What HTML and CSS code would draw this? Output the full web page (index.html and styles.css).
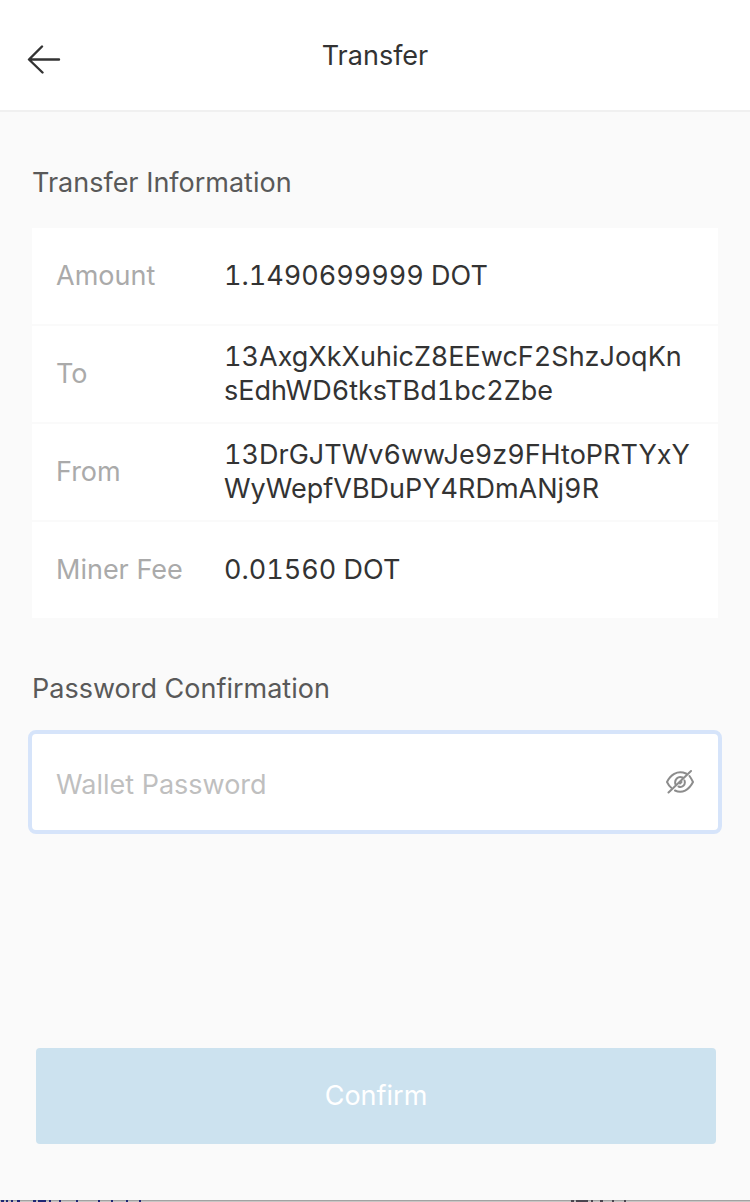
FILE: index.html
```html
<!DOCTYPE html>
<html lang="en">
<head>
<meta charset="utf-8">
<meta name="viewport" content="width=device-width, initial-scale=1">
<title>Transfer</title>
<link rel="stylesheet" href="styles.css">
</head>
<body>
<div class="page">
  <header class="topbar">
    <button class="back" type="button" aria-label="Back">
      <svg width="34" height="30" viewBox="0 0 34 30" fill="none" stroke="#333" stroke-width="2.4" stroke-linecap="round" stroke-linejoin="round"><path d="M15 2.500 2 15.500l13.500 13M2.500 15.500H32"/></svg>
    </button>
    <h1 class="title">Transfer</h1>
  </header>
  <form class="content">
    <h2 class="heading">Transfer Information</h2>
    <dl class="details">
      <div class="row"><dt>Amount</dt><dd>1.1490699999 DOT</dd></div>
      <div class="row"><dt>To</dt><dd>13AxgXkXuhicZ8EEwcF2ShzJoqKn<wbr>sEdhWD6tksTBd1bc2Zbe</dd></div>
      <div class="row"><dt>From</dt><dd>13DrGJTWv6wwJe9z9FHtoPRTYxY<wbr>WyWepfVBDuPY4RDmANj9R</dd></div>
      <div class="row"><dt>Miner Fee</dt><dd>0.01560 DOT</dd></div>
    </dl>
    <label class="heading" for="password">Password Confirmation</label>
    <div class="field">
      <input id="password" type="password" placeholder="Wallet Password">
      <button class="reveal" type="button" aria-label="Show password">
        <svg width="28" height="26" viewBox="0 0 28 26" fill="none" stroke="#8c8c8c" stroke-width="2" stroke-linecap="round"><path d="M20 4.500C11 .5 4 6.500 1 13c1 2 2 4 4 5.500M23.500 7c1.500 2 2.500 4 3.500 6-4 8-11 12-18 8.500M16.500 8.500C12 6.500 8 11 9.500 15.500M18.500 11.500C20 16 16 19 12.500 17.500M15.500 13 14 14.500M2.500 23.500 25 2"/></svg>
      </button>
    </div>
    <button class="confirm" type="button">Confirm</button>
  </form>
  <svg class="edge" height="2" aria-hidden="true"><path d="M0 .5H750" stroke="#a2a2a2"/><path d="M0 1.500H750" stroke="#c8c5c4"/><path d="M1 1h3m2 0h2m3 0h2m4 0h3m13 0h3m2 0h8m3 0h2m8 0h2m15 0h2m20 0h2m11 0h2m13 0h2m11 0h2" stroke="#1f2674" stroke-width="2"/><path d="M571 1h3m2 0h12m3 0h2m7 0h3m9 0h2m10 0h2" stroke="#4b454f" stroke-width="2"/></svg>
</div>
</body>
</html>
```
FILE: styles.css
```css
* { box-sizing: border-box; }
body { margin: 0; background: #fafafa; color: #333; font: 400 27px/34px Inter, "Liberation Sans", sans-serif; }
button { border: 0; padding: 0; background: none; font: inherit; }
h1, h2, dl, dd { margin: 0; font: inherit; }
.page { min-height: 100vh; display: flex; flex-direction: column; }
.topbar { height: 112px; padding: 0 27px; background: #fff; border-bottom: 2px solid #f0f0f0; display: grid; grid-template-columns: 34px 1fr 34px; align-items: center; }
.back { display: flex; padding-top: 8px; }
.title { text-align: center; padding-top: 2px; }
.content { flex: 1; display: flex; flex-direction: column; padding: 54px 32px 56px; }
.heading { color: #595959; }
.details { margin: 28px 0 54px; display: flex; flex-direction: column; gap: 2px; }
.row { min-height: 96px; padding: 14px 24px; background: #fff; display: grid; grid-template-columns: 168px 1fr; align-items: center; }
.row dt { color: #aaa; }
.row dd { font-variant-numeric: tabular-nums; }
.field { margin: 24px -4px 0; height: 104px; border: 4px solid #d6e4fa; border-radius: 8px; background: #fff; display: flex; align-items: center; padding: 0 24px; }
.field input { flex: 1; min-width: 0; height: 96px; padding: 4px 0 0; border: 0; outline: 0; background: transparent; color: #333; font: inherit; }
.field input::placeholder { color: #bfbfbf; opacity: 1; }
.reveal { display: flex; }
.confirm { height: 96px; margin: auto 2px 0 4px; border-radius: 4px; background: #cce2ef; color: #fff; }
.edge { display: block; width: 100%; }
```
